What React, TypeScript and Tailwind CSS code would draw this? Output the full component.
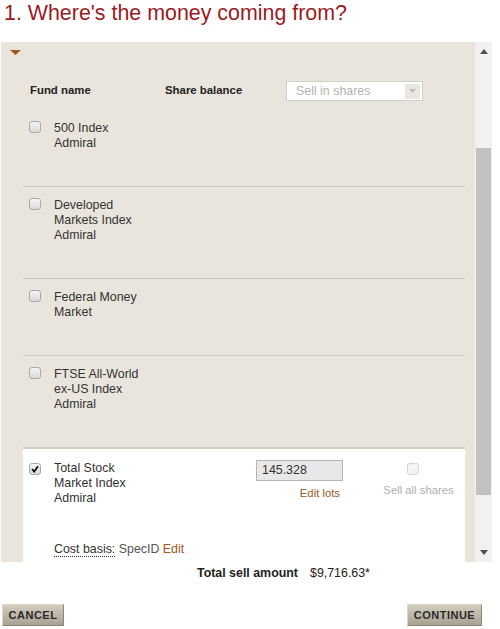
import React from 'react';

const Box: React.FC<{ checked?: boolean; faint?: boolean }> = ({ checked, faint }) => (
  <div
    className={`flex h-[12px] w-[12px] flex-shrink-0 items-center justify-center rounded-[3px] border ${
      faint ? 'border-[#d4d4d4] bg-[#f4f4f4]' : 'border-[#a9a9a9] bg-gradient-to-b from-[#f6f6f6] to-[#d9d9d9]'
    }`}
  >
    {checked && (
      <svg width="8" height="8" viewBox="0 0 8 8">
        <path d="M1 4.2 L3.2 6.5 L7 1.2" fill="none" stroke="#111" strokeWidth="1.8" />
      </svg>
    )}
  </div>
);

const funds = [
  ['500 Index', 'Admiral'],
  ['Developed', 'Markets Index', 'Admiral'],
  ['Federal Money', 'Market'],
  ['FTSE All-World', 'ex-US Index', 'Admiral'],
];

const FundRow: React.FC<{ lines: string[]; first?: boolean }> = ({ lines, first }) => (
  <div className={`flex pb-[35px] pl-[6px] ${first ? '' : 'border-t border-[#cdc9c1] pt-[11px]'}`}>
    <Box />
    <div className="ml-[13px] text-[12.4px] leading-[15px] text-[#333]">
      {lines.map((l) => (
        <div key={l}>{l}</div>
      ))}
    </div>
  </div>
);

export default function App() {
  return (
    <div className="w-[500px] h-[629px] bg-white font-['Liberation_Sans',Arial,sans-serif]">
      {/* Title */}
      <div className="h-[42px] pl-[4px] pt-[1px] text-[21.4px] leading-[25px] text-[#9b1b1f]">
        1. Where's the money coming from?
      </div>

      {/* Scroll panel */}
      <div className="ml-px flex h-[520px] w-[491px]">
        <div className="flex-1 overflow-hidden bg-[#e9e5dc]">
          <div className="pl-[9px] pt-[8px]">
            <svg width="11" height="5" viewBox="0 0 11 5">
              <path d="M0 0 H11 L5.5 5 Z" fill="#a3571f" />
            </svg>
          </div>

          {/* Header row */}
          <div className="mt-[26px] flex h-[20px] items-center text-[11.4px] font-bold text-[#222]">
            <div className="w-[164px] pl-[29px]">Fund name</div>
            <div className="w-[121px]">Share balance</div>
            <div className="flex h-[20px] w-[137px] items-center justify-between border border-[#d0d0d0] bg-white pl-[9px] pr-[2px]">
              <span className="text-[12.4px] font-normal text-[#b3b3b3]">Sell in shares</span>
              <div className="flex h-[15px] w-[15px] items-center justify-center bg-[#ebe7df]">
                <svg width="7" height="4" viewBox="0 0 7 4">
                  <path d="M0 0 H7 L3.5 4 Z" fill="#bbb" />
                </svg>
              </div>
            </div>
          </div>

          {/* Rows */}
          <div className="ml-[22px] mr-[10px] mt-[20px]">
            {funds.map((f, i) => (
              <FundRow key={f[0]} lines={f} first={i === 0} />
            ))}

            {/* Selected row */}
            <div className="border-t-2 border-[#d3cfc7] bg-white pl-[6px] pt-[12px]">
              <div className="flex">
                <div className="pt-[2px]">
                  <Box checked />
                </div>
                <div className="ml-[13px] w-[202px] text-[12.4px] leading-[15px] text-[#333]">
                  <div>Total Stock</div>
                  <div>Market Index</div>
                  <div>Admiral</div>
                </div>
                <div className="-mt-[1px] flex w-[87px] flex-col items-end">
                  <div className="h-[21px] w-[87px] border border-[#b5b5b5] bg-[#e8e8e8] pl-[5px] text-[12.4px] leading-[19px] text-[#333]">
                    145.328
                  </div>
                  <div className="mt-[5px] pr-[3px] text-[11.3px] leading-[14px] text-[#9c5a1e]">Edit lots</div>
                </div>
                <div className="ml-[41px] flex w-[69px] flex-col items-center pt-[2px]">
                  <div className="-ml-[12px]">
                    <Box faint />
                  </div>
                  <div className="mt-[8px] whitespace-nowrap text-[11.3px] leading-[14px] text-[#b0b0b0]">
                    Sell all shares
                  </div>
                </div>
              </div>
              <div className="mt-[36px] ml-[25px] text-[12.4px] leading-[15px] text-[#555]">
                <span className="border-b border-dotted border-[#333] text-[#333]">Cost basis:</span> SpecID{' '}
                <span className="text-[#9c5a1e]">Edit</span>
              </div>
              <div className="h-[40px]" />
            </div>
          </div>
        </div>

        {/* Scrollbar */}
        <div className="flex w-[17px] flex-col items-center bg-[#f1f1f1]">
          <svg className="mt-[7px]" width="8" height="5" viewBox="0 0 8 5">
            <path d="M0 5 H8 L4 0 Z" fill="#505050" />
          </svg>
          <div className="mt-[94px] h-[347px] w-[15px] bg-[#c1c1c1]" />
          <div className="flex-1" />
          <svg className="mb-[7px]" width="8" height="5" viewBox="0 0 8 5">
            <path d="M0 0 H8 L4 5 Z" fill="#505050" />
          </svg>
        </div>
      </div>

      {/* Total */}
      <div className="flex h-[22px] items-center text-[12.4px] text-[#222]">
        <span className="ml-[197px] font-bold">Total sell amount</span>
        <span className="ml-[12px]">$9,716.63*</span>
      </div>

      {/* Buttons */}
      <div className="mt-[20px] flex justify-between pl-[2px] pr-[18px]">
        <button className="h-[22px] w-[62px] border border-t-[#ddd8cc] border-l-[#ddd8cc] border-r-[#8e8778] border-b-[#8e8778] bg-gradient-to-b from-[#d3cdc0] to-[#a9a291] text-[11px] font-bold tracking-[0.5px] text-[#2a2a2a]">
          CANCEL
        </button>
        <button className="h-[22px] w-[75px] border border-t-[#ddd8cc] border-l-[#ddd8cc] border-r-[#8e8778] border-b-[#8e8778] bg-gradient-to-b from-[#d3cdc0] to-[#a9a291] text-[11px] font-bold tracking-[0.5px] text-[#2a2a2a]">
          CONTINUE
        </button>
      </div>
    </div>
  );
}
